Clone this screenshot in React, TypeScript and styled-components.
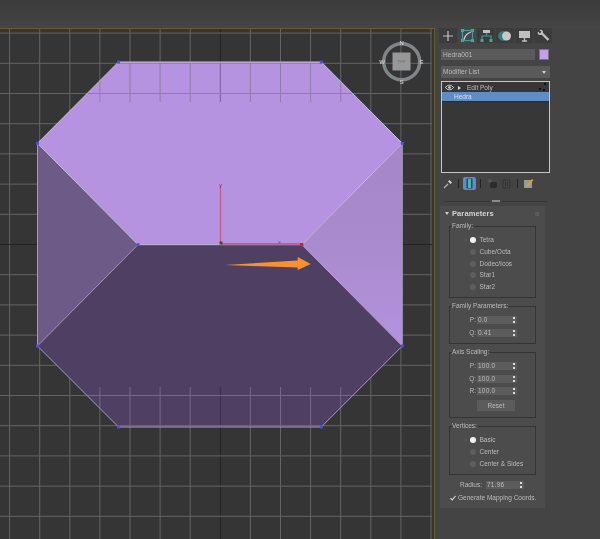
import React from "react";
import styled, { createGlobalStyle } from "styled-components";

const GlobalStyle = createGlobalStyle`
  html, body {
    margin: 0;
    padding: 0;
    background: #444;
    overflow: hidden;
  }
  * { box-sizing: border-box; }
`;

const Page = styled.div`
  width: 600px;
  height: 539px;
  display: flex;
  flex-direction: column;
  overflow: hidden;
  font-family: "Liberation Sans", Arial, sans-serif;
  background: #444;
`;

const TopBar = styled.div`
  height: 28px;
  flex: none;
  background: linear-gradient(#3b3b3b, #454545);
`;

const Main = styled.div`
  flex: 1;
  display: flex;
  min-height: 0;
`;

const Viewport = styled.div`
  width: 435px;
  flex: none;
  border-top: 1px solid #6b5a2e;
  border-right: 1px solid #6b5a2e;
  background: #353535;
  filter: blur(0.4px);

  svg { display: block; }
`;

const Side = styled.div`
  flex: 1;
  padding-left: 1px;
  color: #bcbcbc;
  font-size: 6.5px;
  line-height: 8px;
  filter: blur(0.45px);
`;

const TabRow = styled.div`
  display: flex;
  margin-left: 3px;
  height: 15px;
`;

const Tab = styled.div<{ $active?: boolean }>`
  width: 19px;
  display: flex;
  align-items: center;
  justify-content: center;
  background: ${({ $active }) => ($active ? "#474747" : "#3c3c3c")};
  border-right: 1px solid #434343;
`;

const NameRow = styled.div`
  display: flex;
  gap: 4px;
  margin: 6px 0 0 5px;
`;

const NameInput = styled.div`
  width: 94px;
  height: 11px;
  padding-left: 2px;
  background: #5a5a5a;
  line-height: 11px;
  letter-spacing: 0.1px;
`;

const Swatch = styled.div`
  width: 10px;
  height: 11px;
  background: #c49ff0;
  border: 1px solid #777;
`;

const ModifierSelect = styled.div`
  width: 109px;
  height: 12px;
  margin: 6px 0 0 5px;
  padding: 0 4px 0 2px;
  display: flex;
  align-items: center;
  justify-content: space-between;
  background: #5a5a5a;
  line-height: 12px;
  letter-spacing: 0.1px;

  &::after {
    content: "";
    border: 2px solid transparent;
    border-top: 3px solid #d0d0d0;
    border-bottom: 0;
  }
`;

const StackBox = styled.div`
  width: 109px;
  height: 92px;
  margin: 3px 0 0 5px;
  border: 1px solid #c6c6c6;
  background: #373737;
  padding-top: 1px;
`;

const StackRow = styled.div`
  height: 9px;
  display: flex;
  align-items: center;
  position: relative;
  padding-left: 3px;
  gap: 2px;
`;

const Triangle = styled.span`
  width: 0;
  height: 0;
  margin: 0 4px 0 2px;
  border: 2px solid transparent;
  border-left: 3px solid #d8d8d8;
  border-right: 0;
`;

const StackDots = styled.span`
  position: absolute;
  right: 3px;
  top: 0;
  width: 7px;
  height: 8px;
  background:
    radial-gradient(circle at 1px 6px, #111 1px, transparent 1.2px),
    radial-gradient(circle at 5px 7px, #111 1px, transparent 1.2px),
    radial-gradient(circle at 6px 1px, #111 1px, transparent 1.2px);
`;

const StackSelected = styled.div`
  height: 10px;
  background: #5e8cc5;
  border-bottom: 1px solid #2d2d2d;
  color: #d8e2ee;
  padding-left: 12px;
  line-height: 9px;
`;

const Toolbar = styled.div`
  display: flex;
  align-items: center;
  height: 13px;
  margin: 4px 0 0 6px;
`;

const ToolSlot = styled.div<{ $active?: boolean; $width?: number }>`
  width: ${({ $width }) => $width ?? 12}px;
  height: 13px;
  display: flex;
  align-items: center;
  justify-content: center;
  border-radius: 2px;
  background: ${({ $active }) => ($active ? "#5b8dc9" : "transparent")};
`;

const ToolSep = styled.span`
  width: 1px;
  height: 9px;
  margin: 0 4px;
  background: #222;
`;

const Divider = styled.div`
  display: flex;
  align-items: center;
  gap: 2px;
  height: 2px;
  margin: 10px 0 0 8px;
  width: 103px;
`;

const DividerLine = styled.span`
  flex: 1;
  height: 1px;
  background: #373737;
`;

const DividerGrip = styled.span`
  width: 8px;
  height: 2px;
  background: #8a8a8a;
`;

const Panel = styled.div`
  width: 105px;
  height: 302px;
  margin: 4px 0 0 4px;
  background: #4c4c4c;
`;

const PanelHeader = styled.div`
  height: 20px;
  padding: 0 6px 5px 5px;
  display: flex;
  align-items: center;
  color: #d4d4d4;
  font-size: 7.5px;
  font-weight: bold;
  letter-spacing: 0.1px;

  &::before {
    content: "";
    margin-right: 3px;
    border: 2px solid transparent;
    border-top: 3px solid #c8c8c8;
    border-bottom: 0;
  }

  &::after {
    content: "";
    margin-left: auto;
    width: 4px;
    height: 4px;
    background: #5c5c5c;
  }
`;

const Group = styled.div<{ $height: number }>`
  width: 87px;
  height: ${({ $height }) => $height}px;
  margin: 0 0 8px 9px;
  border: 1px solid #343434;
`;

const Legend = styled.div`
  width: fit-content;
  height: 8px;
  margin: -5px 0 0 2px;
  padding-right: 1px;
  background: #4c4c4c;
  white-space: nowrap;
`;

const RadioList = styled.div`
  padding: 4.5px 0 0 19.5px;
`;

const RadioRow = styled.div`
  height: 11.7px;
  display: flex;
  align-items: center;
  gap: 4px;
`;

const RadioDot = styled.span<{ $on?: boolean }>`
  width: 6px;
  height: 6px;
  border-radius: 50%;
  background: ${({ $on }) => ($on ? "#f2f2f2" : "#5e5e5e")};
`;

const SpinList = styled.div`
  padding-top: 6.3px;
  display: flex;
  flex-direction: column;
  gap: 4.5px;
`;

const SpinRow = styled.div`
  display: flex;
  align-items: center;
  gap: 1px;
`;

const SpinLabel = styled.span`
  width: 26px;
  text-align: right;
`;

const Spinner = styled.div<{ $width: number }>`
  width: ${({ $width }) => $width}px;
  height: 8px;
  padding: 0 2px 0 1px;
  display: flex;
  align-items: center;
  justify-content: space-between;
  background: #5c5c5c;
  letter-spacing: 0.2px;

  &::after {
    content: "";
    width: 2px;
    height: 6px;
    background: linear-gradient(#ddd 0 40%, transparent 40% 60%, #ddd 60%);
  }
`;

const ResetButton = styled.div`
  width: 38px;
  height: 11px;
  margin: 5px 0 0 27px;
  background: #5c5c5c;
  border-radius: 1px;
  text-align: center;
  line-height: 11px;
`;

const RadiusRow = styled.div`
  display: flex;
  align-items: center;
  gap: 4px;
  padding-left: 20px;
  margin-top: -2px;
`;

const CheckRow = styled.div`
  display: flex;
  align-items: center;
  gap: 2px;
  margin: 5px 0 0 10px;
  white-space: nowrap;
`;

const verticals = Array.from({ length: 15 }, (_, i) => 9.6 + i * 30.1);
const horizontals = Array.from({ length: 17 }, (_, i) => 33.1 + i * 30.2);
const centerX = verticals[7];
const centerY = horizontals[7];

const hull = "118.5,62 321.3,62 402.3,143.3 402.3,346 321.3,427 118.5,427 37.5,346 37.5,143.3";
const vertices = [
  [118.5, 62],
  [321.3, 62],
  [37.5, 143.3],
  [402.3, 143.3],
  [138, 244.7],
  [302, 244.7],
  [37.5, 346],
  [402.3, 346],
  [118.5, 427],
  [321.3, 427],
];

const Scene = () => (
  <svg width="434" height="510" viewBox="0 29 434 510">
    <defs>
      <clipPath id="hull">
        <polygon points={hull} />
      </clipPath>
      <linearGradient id="rightFace" x1="0" y1="0" x2="0" y2="1">
        <stop offset="0" stopColor="#a586c8" />
        <stop offset="0.45" stopColor="#a98acd" />
        <stop offset="1" stopColor="#b592de" />
      </linearGradient>
    </defs>

    {verticals.map((x) => (
      <line key={x} x1={x} y1="29" x2={x} y2="539" stroke={x === centerX ? "#232323" : "#646464"} />
    ))}
    {horizontals.map((y) => (
      <line key={y} x1="0" y1={y} x2="432" y2={y} stroke={y === centerY ? "#232323" : "#646464"} />
    ))}

    <polygon points="118.5,62 321.3,62 402.3,143.3 302,244.7 138,244.7 37.5,143.3" fill="#b693e0" />
    <polygon points="37.5,143.3 138,244.7 37.5,346" fill="#6e5a87" />
    <polygon points="402.3,143.3 302,244.7 402.3,346" fill="url(#rightFace)" />
    <polygon points="138,244.7 302,244.7 402.3,346 321.3,427 118.5,427 37.5,346" fill="#4f3f63" />

    <g clipPath="url(#hull)" stroke="#8f7da6">
      {verticals.filter((x) => x > 90 && x < 350).map((x) => (
        <line key={x} x1={x} y1="62" x2={x} y2="102" stroke={x === centerX ? "#7a5f9c" : "#8f7da6"} />
      ))}
      <line x1="30" y1={horizontals[1]} x2="410" y2={horizontals[1]} />
      <line x1="30" y1={horizontals[2]} x2="410" y2={horizontals[2]} />
    </g>
    <g clipPath="url(#hull)" stroke="#74678a">
      {verticals.filter((x) => x > 90 && x < 350).map((x) => (
        <line key={x} x1={x} y1="387" x2={x} y2="427" stroke={x === centerX ? "#3a2e4a" : "#74678a"} />
      ))}
      <line x1="30" y1={horizontals[12]} x2="410" y2={horizontals[12]} />
      <line x1="30" y1={horizontals[13]} x2="410" y2={horizontals[13]} />
    </g>

    <g fill="none" strokeWidth="1">
      <polyline points="37.5,143.3 118.5,62 321.3,62 402.3,143.3" stroke="#c9bedb" />
      <polyline points="37.5,143.3 37.5,346 118.5,427 321.3,427 402.3,346 402.3,143.3" stroke="#a799b8" />
      <polyline points="37.5,143.3 138,244.7 302,244.7 402.3,143.3" stroke="#cbbddf" />
      <polyline points="37.5,346 138,244.7" stroke="#a697ba" />
      <polyline points="302,244.7 402.3,346" stroke="#b8a8cc" />
    </g>

    {vertices.map(([x, y]) => (
      <rect key={`${x}-${y}`} x={x - 1.5} y={y - 1.5} width="3" height="3" fill="#4a50e0" />
    ))}

    <line x1="220.5" y1="185" x2="220.5" y2="243" stroke="#c25a86" strokeWidth="1.2" />
    <line x1="221" y1="244" x2="300" y2="244" stroke="#a9305a" strokeWidth="1.2" />
    <text x="219" y="187" fontSize="6" fill="#8c3c66" fontFamily="Liberation Sans">y</text>
    <text x="278" y="244" fontSize="6" fill="#8c3c66" fontFamily="Liberation Sans">x</text>
    <rect x="219.5" y="241.5" width="3" height="3" fill="#444" />
    <rect x="300" y="243" width="3" height="3" fill="#d81f2a" />

    <polygon points="225,265 297.7,260.5 297.7,257 310.7,264 297.7,270 297.7,267.5" fill="#f7922e" />

    <circle cx="401.7" cy="61.7" r="18" fill="none" stroke="#7f8588" strokeWidth="3.5" />
    <rect x="392.5" y="52.5" width="18" height="18" fill="#989898" />
    <g fontFamily="Liberation Sans" fontWeight="bold" textAnchor="middle">
      <text x="401.5" y="63" fontSize="4" fill="#777">TOP</text>
      <g fontSize="6" fill="#c4c4c4">
        <text x="401.7" y="45">N</text>
        <text x="401.7" y="84">S</text>
        <text x="421.5" y="64">E</text>
        <text x="382" y="64">W</text>
      </g>
    </g>
  </svg>
);

const PlusIcon = () => (
  <svg width="12" height="12" viewBox="0 0 12 12">
    <path d="M6 1v10M1 6h10" stroke="#c4c4c4" strokeWidth="1.2" />
  </svg>
);

const ModifyIcon = () => (
  <svg width="13" height="13" viewBox="0 0 13 13" fill="none">
    <rect x="1.5" y="1.5" width="10" height="10" stroke="#3f9c9c" strokeWidth="1.2" />
    <path d="M3 10.5C4 6.5 6.5 4 10 3" stroke="#d4d4d4" strokeWidth="1.3" />
    <path d="M0 0h3v3H0zM10 0h3v3h-3zM0 10h3v3H0zM10 10h3v3h-3z" fill="#3fa5a5" />
  </svg>
);

const HierarchyIcon = () => (
  <svg width="13" height="13" viewBox="0 0 13 13" fill="none">
    <rect x="3" y="1" width="7" height="3" fill="#c0c0c0" />
    <path d="M6.5 4v3M2 11V7h9v4" stroke="#3f9c9c" strokeWidth="1.2" />
    <path d="M0.5 10h3v3h-3zM9.5 10h3v3h-3z" fill="#3fa5a5" />
  </svg>
);

const MotionIcon = () => (
  <svg width="14" height="12" viewBox="0 0 14 12">
    <ellipse cx="6" cy="6" rx="6" ry="5" fill="#2e7f80" />
    <circle cx="8.5" cy="6" r="4.5" fill="#c8c8c8" />
  </svg>
);

const DisplayIcon = () => (
  <svg width="13" height="12" viewBox="0 0 13 12">
    <rect x="1" y="1" width="11" height="7" fill="#c0c0c0" />
    <path d="M4 11h5M6.5 8v3" stroke="#c0c0c0" strokeWidth="1.3" />
  </svg>
);

const WrenchIcon = () => (
  <svg width="13" height="13" viewBox="0 0 13 13" fill="none">
    <path d="M4 3.5l7.5 7.5" stroke="#c0c0c0" strokeWidth="2.4" />
    <path d="M1 2.5L3 4.5 4.5 3 2.5 1C4.5 0 6.5 1.5 6 4L4 6C1.5 6.5 0 4.5 1 2.5z" fill="#c0c0c0" />
  </svg>
);

const EyeIcon = () => (
  <svg width="9" height="7" viewBox="0 0 9 7" fill="none">
    <path d="M0.5 3.5C2.5 0.5 6.5 0.5 8.5 3.5 6.5 6.5 2.5 6.5 0.5 3.5z" stroke="#e0e0e0" />
    <circle cx="4.5" cy="3.5" r="1.3" fill="#e0e0e0" />
  </svg>
);

const PinIcon = () => (
  <svg width="10" height="10" viewBox="0 0 10 10" fill="none">
    <path d="M1 9l4-4" stroke="#b0b0b0" strokeWidth="1.2" />
    <path d="M5 2.5L7.5 5 9 3.5 6.5 1z" fill="#d0d0d0" />
  </svg>
);

const StackIcon = () => (
  <svg width="7" height="11" viewBox="0 0 7 11">
    <rect x="0.5" y="0.5" width="6" height="10" fill="#2c4a63" />
    <rect x="2" y="1" width="3" height="9" fill="#49b5ab" />
  </svg>
);

const UniqueIcon = () => (
  <svg width="11" height="11" viewBox="0 0 11 11">
    <circle cx="3" cy="3" r="2" fill="#555" />
    <rect x="3" y="4" width="7" height="6" rx="1.5" fill="#2c2c2c" />
  </svg>
);

const TrashIcon = () => (
  <svg width="9" height="11" viewBox="0 0 9 11" fill="none">
    <path d="M1 2h7v8H1zM3.5 4v4M5.5 4v4" stroke="#333" />
  </svg>
);

const ConfigIcon = () => (
  <svg width="11" height="11" viewBox="0 0 11 11">
    <rect x="1" y="2" width="8" height="8" fill="#9a9a9a" />
    <path d="M3 8l6-7 1.5 1-6 7z" fill="#e0a020" />
  </svg>
);

const CheckIcon = () => (
  <svg width="6" height="6" viewBox="0 0 6 6" fill="none">
    <path d="M0.5 3.2L2.2 5 5.5 1" stroke="#e0e0e0" strokeWidth="1.1" />
  </svg>
);

const Radio = ({ label, on }: { label: string; on?: boolean }) => (
  <RadioRow>
    <RadioDot $on={on} />
    {label}
  </RadioRow>
);

const Spin = ({ label, value }: { label: string; value: string }) => (
  <SpinRow>
    <SpinLabel>{label}</SpinLabel>
    <Spinner $width={40}>{value}</Spinner>
  </SpinRow>
);

export default function App() {
  return (
    <Page>
      <GlobalStyle />
      <TopBar />
      <Main>
        <Viewport>
          <Scene />
        </Viewport>
        <Side>
          <TabRow>
            <Tab><PlusIcon /></Tab>
            <Tab $active><ModifyIcon /></Tab>
            <Tab><HierarchyIcon /></Tab>
            <Tab><MotionIcon /></Tab>
            <Tab><DisplayIcon /></Tab>
            <Tab><WrenchIcon /></Tab>
          </TabRow>
          <NameRow>
            <NameInput>Hedra001</NameInput>
            <Swatch />
          </NameRow>
          <ModifierSelect>Modifier List</ModifierSelect>
          <StackBox>
            <StackRow>
              <EyeIcon />
              <Triangle />
              Edit Poly
              <StackDots />
            </StackRow>
            <StackSelected>Hedra</StackSelected>
          </StackBox>
          <Toolbar>
            <ToolSlot><PinIcon /></ToolSlot>
            <ToolSep />
            <ToolSlot $active $width={13}><StackIcon /></ToolSlot>
            <ToolSep />
            <ToolSlot $width={14}><UniqueIcon /></ToolSlot>
            <ToolSlot $width={14}><TrashIcon /></ToolSlot>
            <ToolSep />
            <ToolSlot><ConfigIcon /></ToolSlot>
          </Toolbar>
          <Divider>
            <DividerLine />
            <DividerGrip />
            <DividerLine />
          </Divider>
          <Panel>
            <PanelHeader>Parameters</PanelHeader>
            <Group $height={72}>
              <Legend>Family:</Legend>
              <RadioList>
                <Radio label="Tetra" on />
                <Radio label="Cube/Octa" />
                <Radio label="Dodec/Icos" />
                <Radio label="Star1" />
                <Radio label="Star2" />
              </RadioList>
            </Group>
            <Group $height={38}>
              <Legend>Family Parameters:</Legend>
              <SpinList>
                <Spin label="P:" value="0.0" />
                <Spin label="Q:" value="0.41" />
              </SpinList>
            </Group>
            <Group $height={66}>
              <Legend>Axis Scaling:</Legend>
              <SpinList>
                <Spin label="P:" value="100.0" />
                <Spin label="Q:" value="100.0" />
                <Spin label="R:" value="100.0" />
              </SpinList>
              <ResetButton>Reset</ResetButton>
            </Group>
            <Group $height={49}>
              <Legend>Vertices:</Legend>
              <RadioList>
                <Radio label="Basic" on />
                <Radio label="Center" />
                <Radio label="Center & Sides" />
              </RadioList>
            </Group>
            <RadiusRow>
              Radius:
              <Spinner $width={38}>71.96</Spinner>
            </RadiusRow>
            <CheckRow>
              <CheckIcon />
              Generate Mapping Coords.
            </CheckRow>
          </Panel>
        </Side>
      </Main>
    </Page>
  );
}
